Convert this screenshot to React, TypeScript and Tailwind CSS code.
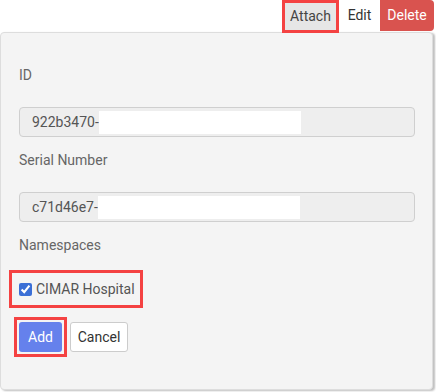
import React from 'react';

const Field: React.FC<{ label: string; value: string; className?: string }> = ({ label, value, className }) => (
  <div className={className}>
    <div className="leading-[20px] text-[14px] text-[#666]">{label}</div>
    <div className="mt-[22px] h-[30px] w-[396px] rounded-[4px] border border-[#cfcfcf] bg-[#eeeeee] flex items-center pl-[12px] text-[14px] text-[#555]">
      <span>{value}</span>
      {/* redacted part */}
      <span className="h-[23px] w-[202px] bg-white" />
    </div>
  </div>
);

export default function App() {
  return (
    <div className="w-[436px] h-[392px] bg-white overflow-hidden font-['Roboto',sans-serif]">
      <div className="flex justify-end pr-[2px] h-[32px]">
        <div className="border-[3px] border-[#f44242] h-[33px] flex">
          <button className="w-[51px] h-[27px] bg-[#e6e6e6] text-[14px] text-[#444]">Attach</button>
        </div>
        <button className="w-[41px] h-[31px] bg-white text-[14px] text-[#333]">Edit</button>
        <button className="w-[54px] h-[31px] bg-[#d9534f] text-[14px] text-white rounded-r-[4px]">Delete</button>
      </div>
      <div className="w-[433px] h-[358px] rounded-[4px] border border-[#dddddd] bg-[#f4f4f4] shadow-[2px_1px_2px_rgba(0,0,0,0.25)] pl-[18px] pt-[32px]">
        <Field label="ID" value="922b3470-" />
        <Field label="Serial Number" value="c71d46e7-" className="mt-[13px]" />
        <div className="mt-[13px] leading-[20px] text-[14px] text-[#666]">Namespaces</div>
        <div className="mt-[15px] -ml-[10px] w-[134px] h-[38px] border-[3px] border-[#f44242] flex items-center pl-[7px] gap-[4px] whitespace-nowrap">
          <input type="checkbox" defaultChecked className="w-[13px] h-[13px] m-0 accent-[#3b6fd6]" />
          <span className="text-[14px] text-[#555]">CIMAR Hospital</span>
        </div>
        <div className="mt-[9px] -ml-[5px] flex items-center gap-[3px]">
          <div className="border-[3px] border-[#f44242] p-[2px]">
            <button className="w-[43px] h-[30px] rounded-[3px] bg-[#6581ec] text-white text-[14px]">Add</button>
          </div>
          <button className="w-[58px] h-[30px] rounded-[3px] border border-[#cccccc] bg-white text-[14px] text-[#333]">Cancel</button>
        </div>
      </div>
    </div>
  );
}
